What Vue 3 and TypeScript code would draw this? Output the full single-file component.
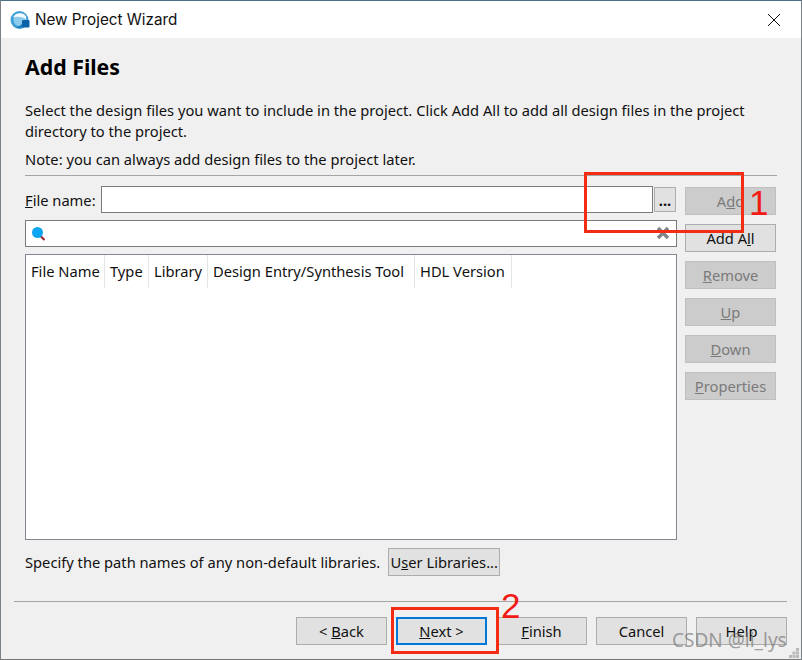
<script setup lang="ts">
interface Col { label: string; width: number }
const cols: Col[] = [
  { label: 'File Name', width: 79 },
  { label: 'Type', width: 44 },
  { label: 'Library', width: 59 },
  { label: 'Design Entry/Synthesis Tool', width: 207 },
  { label: 'HDL Version', width: 97 },
]
const sideButtons = [
  { key: 'R', post: 'emove' },
  { key: 'U', post: 'p' },
  { key: 'D', post: 'own' },
  { key: 'P', post: 'roperties' },
]
</script>

<template>
  <div class="window">
    <header class="titlebar">
      <svg class="logo" width="20" height="20" viewBox="0 0 20 20">
        <circle cx="9.500" cy="10" r="9" fill="#3f9fd8" />
        <circle cx="10" cy="10" r="6.500" fill="#8ccbec" />
        <path d="M3 7.500C5 3 10 2 14.500 4.500c1.500 1 2 3 1.500 4.500C12 6.500 7 6 3 7.500z" fill="#f4fafd" />
        <path d="M5 17c4 2 7 1 9-1l-2-2c-2 2-5 3-7 3z" fill="#1f7fbe" />
        <rect x="12" y="10" width="7.500" height="7.500" rx="1" fill="#0b62a6" />
      </svg>
      <span class="title">New Project Wizard</span>
      <svg class="close" width="14" height="14" viewBox="0 0 14 14">
        <path d="M1 1l12 12M13 1L1 13" stroke="#111" stroke-width="1" fill="none" />
      </svg>
    </header>

    <main class="body">
      <section class="content">
        <h1>Add Files</h1>
        <p class="desc">Select the design files you want to include in the project. Click Add All to add all design files in the project directory to the project.</p>
        <p class="note">Note: you can always add design files to the project later.</p>
        <div class="rule"></div>

        <div class="work">
          <div class="left">
            <div class="file-row">
              <label><u>F</u>ile name:</label>
              <div class="input"></div>
              <button class="btn dots">...</button>
            </div>
            <div class="search">
              <svg width="16" height="16" viewBox="0 0 16 16">
                <path d="M9.500 10l4 4" stroke="#9c1c2c" stroke-width="2" />
                <circle cx="6.500" cy="6.500" r="5.500" fill="#0ca5f2" />
              </svg>
              <svg class="clear" width="14" height="14" viewBox="0 0 14 14">
                <path d="M2 2l10 10M12 2L2 12" stroke="#7f8486" stroke-width="3.400" fill="none" />
              </svg>
            </div>
            <div class="table">
              <div class="thead">
                <div v-for="c in cols" :key="c.label" class="th" :style="{ width: c.width + 'px' }">{{ c.label }}</div>
              </div>
            </div>
          </div>

          <div class="side">
            <button class="btn wide off first">A<u>d</u>d</button>
            <button class="btn wide addall">Add A<u>l</u>l</button>
            <button v-for="b in sideButtons" :key="b.key" class="btn wide off"><u>{{ b.key }}</u>{{ b.post }}</button>
          </div>
        </div>

        <div class="lib-row">
          <span>Specify the path names of any non-default libraries.</span>
          <button class="btn lib">U<u>s</u>er Libraries...</button>
        </div>
      </section>

      <div class="bottom-rule"></div>
      <footer class="footer">
        <button class="btn wide">&lt; <u>B</u>ack</button>
        <button class="btn wide next"><u>N</u>ext &gt;</button>
        <button class="btn wide"><u>F</u>inish</button>
        <button class="btn wide">Cancel</button>
        <button class="btn wide">Help</button>
      </footer>
    </main>

    <div class="mark box1"></div>
    <div class="mark box2"></div>
    <span class="num n1">1</span>
    <span class="num n2">2</span>
    <span class="wm">CSDN @li_lys</span>
    <svg class="grip" width="10" height="10" viewBox="0 0 10 10" fill="#b9b9b9">
      <rect x="7" y="0" width="3" height="3" /><rect x="3.500" y="3.500" width="3" height="3" /><rect x="7" y="3.500" width="3" height="3" />
      <rect x="0" y="7" width="3" height="3" /><rect x="3.500" y="7" width="3" height="3" /><rect x="7" y="7" width="3" height="3" />
    </svg>
  </div>
</template>

<style>
html, body { margin: 0; background: #f0f0f0; }
</style>

<style scoped>
.window {
  position: relative;
  width: 802px;
  height: 660px;
  box-sizing: border-box;
  border: 1px solid #7a8288;
  border-top-color: #4d7186;
  border-bottom-color: #777;
  background: #f0f0f0;
  font-family: "Noto Sans", "Open Sans", sans-serif;
  font-size: 14.700px;
  color: #111;
  overflow: hidden;
}
.titlebar {
  height: 37px;
  background: #fff;
  display: flex;
  align-items: center;
  padding: 0 20px 0 9px;
}
.logo { margin-right: 5px; }
.title { flex: 1; font-family: "Inter", "Noto Sans", sans-serif; font-size: 15.250px; }
.body { height: 620px; display: flex; flex-direction: column; }
.content { padding: 0 24px; height: 563px; display: flex; flex-direction: column; }
h1 { margin: 14px 0 0; font-size: 21.300px; line-height: 30px; font-weight: 700; color: #000; }
.desc { margin: 18px 0 0; line-height: 21px; width: 740px; }
.note { margin: 7px 0 0; line-height: 21px; }
.rule { height: 1px; background: #a5a5a5; margin-top: 5px; width: 752px; }
.work { display: flex; gap: 8px; margin-top: 10px; }
.left { width: 652px; display: flex; flex-direction: column; }
.file-row { display: flex; align-items: center; height: 27px; }
.file-row label { width: 76px; }
.input { width: 552px; height: 27px; box-sizing: border-box; border: 1px solid #7a7a7a; background: #fff; margin-right: 1px; }
.btn {
  box-sizing: border-box;
  height: 28px;
  padding: 0;
  border: 1px solid #adadad;
  background: #e1e1e1;
  color: #111;
  font: inherit;
}
.dots { width: 22px; height: 25px; line-height: 25px; font-weight: 700; }
.search {
  position: relative;
  margin-top: 7px;
  height: 27px;
  box-sizing: border-box;
  border: 1px solid #7a7a7a;
  background: #fff;
  display: flex;
  align-items: center;
  padding-left: 5px;
}
.clear { position: absolute; right: 6px; top: 5px; }
.table {
  margin-top: 7px;
  height: 286px;
  box-sizing: border-box;
  border: 1px solid #828790;
  background: #fff;
}
.thead { display: flex; height: 33px; }
.th {
  box-sizing: border-box;
  padding-left: 5px;
  line-height: 33px;
  border-right: 1px solid #e5e5e5;
  white-space: nowrap;
}
.side { width: 91px; display: flex; flex-direction: column; }
.wide { width: 91px; height: 28px; flex: none; }
.side .wide { margin-bottom: 9px; }
.side .first { margin-top: 1px; margin-bottom: 9px; }
.off { background: #cccccc; border-color: #bfbfbf; color: #7a7a7a; }
.lib-row { display: flex; align-items: center; gap: 8px; margin-top: 8px; height: 28px; }
.lib { width: 112px; }
.bottom-rule { height: 1px; background: #a5a5a5; margin: 0 14px 0 13px; }
.footer { display: flex; justify-content: flex-end; gap: 9px; padding: 15px 14px 0 0; }
.next { border: 2px solid #0078d7; }
.mark { position: absolute; box-sizing: border-box; border: 3px solid #f42c14; }
.box1 { left: 583px; top: 171px; width: 160px; height: 61px; }
.box2 { left: 390px; top: 606px; width: 108px; height: 47px; }
.num { position: absolute; color: #f21a14; font-family: "Liberation Sans", sans-serif; font-size: 35px; line-height: 35px; }
.n1 { left: 748px; top: 184px; }
.n2 { left: 500px; top: 587px; }
.wm { position: absolute; left: 671px; top: 627px; font-size: 19px; line-height: 24px; color: rgba(120, 120, 120, 0.7); white-space: nowrap; }
.grip { position: absolute; right: 2px; bottom: 1px; }
</style>
